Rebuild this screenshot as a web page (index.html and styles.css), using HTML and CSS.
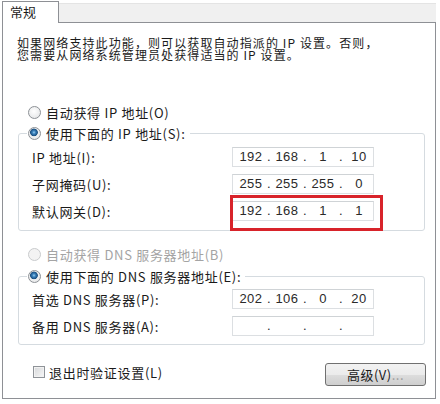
FILE: index.html
```html
<!DOCTYPE html>
<html lang="zh-CN">
<head>
<meta charset="UTF-8">
<title>Internet 协议版本 4 (TCP/IPv4) 属性</title>
<link rel="stylesheet" href="styles.css">
</head>
<body>
    <div class="dialog">
        <div class="tabs">
            <div class="tab">常规</div>
            <div class="tab-fill"></div>
        </div>
        <div class="panel">
            <div class="intro">
                <p>如果网络支持此功能，则可以获取自动指派的 IP 设置。否则，</p>
                <p>您需要从网络系统管理员处获得适当的 IP 设置。</p>
            </div>

            <!-- IP address -->
            <div class="option"><span class="radio"></span>自动获得 IP 地址(O)</div>
            <fieldset class="group ip-group">
                <legend><span class="radio checked"></span>使用下面的 IP 地址(S):</legend>
                <div class="row">
                    <span class="label">IP 地址(I):</span>
                    <div class="ip"><span>192</span><i>.</i><span>168</span><i>.</i><span>1</span><i>.</i><span>10</span></div>
                </div>
                <div class="row">
                    <span class="label">子网掩码(U):</span>
                    <div class="ip"><span>255</span><i>.</i><span>255</span><i>.</i><span>255</span><i>.</i><span>0</span></div>
                </div>
                <div class="row">
                    <span class="label">默认网关(D):</span>
                    <div class="ip marked"><span>192</span><i>.</i><span>168</span><i>.</i><span>1</span><i>.</i><span>1</span></div>
                </div>
            </fieldset>

            <!-- DNS -->
            <div class="option disabled"><span class="radio"></span>自动获得 DNS 服务器地址(B)</div>
            <fieldset class="group dns-group">
                <legend><span class="radio checked"></span>使用下面的 DNS 服务器地址(E):</legend>
                <div class="row">
                    <span class="label">首选 DNS 服务器(P):</span>
                    <div class="ip"><span>202</span><i>.</i><span>106</span><i>.</i><span>0</span><i>.</i><span>20</span></div>
                </div>
                <div class="row">
                    <span class="label">备用 DNS 服务器(A):</span>
                    <div class="ip"><span></span><i>.</i><span></span><i>.</i><span></span><i>.</i><span></span></div>
                </div>
            </fieldset>

            <div class="footer">
                <div class="check"><span class="box"></span>退出时验证设置(L)</div>
                <button class="advanced">高级(V)<span class="dots">...</span></button>
            </div>
        </div>
    </div>
</body>
</html>
```

FILE: styles.css
```css
body {
    margin: 0;
    background: #fff;
    font-family: "Noto Sans CJK SC", sans-serif;
    font-size: 13px;
    color: #1a1a1a;
}

.dialog {
    width: 434px;
    margin-left: 2px;
}

/* tab strip */
.tabs {
    display: flex;
    height: 22px;
}
.tab {
    position: relative;
    z-index: 1;
    width: 48px;
    height: 21px;
    margin-top: 1px;
    margin-bottom: -1px;
    padding-left: 7px;
    border: 1px solid #8e9095;
    border-bottom: none;
    background: #fff;
    line-height: 20px;
}
.tab-fill {
    flex: 1;
    margin-top: 3px;
    background: #f0f0f0;
    border-top: 1px solid #e4e4e4;
}

.panel {
    box-sizing: border-box;
    height: 377px;
    padding: 0 10px 0 15px;
    border: 1px solid #8e9095;
    background: #fff;
    letter-spacing: 0.7px;
}

.intro {
    margin: 14px 0 0 -1px;
    font-size: 12px;
    line-height: 12px;
    letter-spacing: 1.1px;
    white-space: nowrap;
}
.intro p {
    margin: 0;
    height: 12px;
}

/* radio options */
.option {
    display: flex;
    align-items: center;
    height: 16px;
    margin-left: 10px;
}
.ip-group + .option {
    margin-top: 15px;
}
.intro + .option {
    margin-top: 43px;
}
.option.disabled {
    color: #a4a4a4;
}

.radio {
    box-sizing: border-box;
    width: 13px;
    height: 13px;
    margin-right: 5px;
    border: 1px solid #8d9196;
    border-radius: 50%;
    background: radial-gradient(circle at 45% 40%, #ffffff 0, #e9eaeb 70%, #d5d7d9 100%);
}
.radio.checked {
    background:
        radial-gradient(circle at 45% 40%, #9fd0f0 0, #3c84bf 1.5px, #1b4f80 3.5px, transparent 4.2px),
        radial-gradient(circle at 45% 40%, #ffffff 0, #e9eaeb 70%, #d5d7d9 100%);
}
.disabled .radio {
    border-color: #c9cbcd;
    background: #f3f3f3;
}

/* group boxes */
.group {
    margin: 5px 0 0;
    padding: 0 0 9px 13px;
    border: 1px solid #d5dbe0;
    border-radius: 3px;
}
.dns-group {
    margin-top: 6px;
    padding-bottom: 8px;
}
.group legend {
    display: flex;
    align-items: center;
    height: 16px;
    margin-left: -5px;
    padding: 0 4px 0 1px;
}

.row {
    display: flex;
    align-items: center;
    margin-top: 7px;
}
.ip-group .row:first-of-type {
    margin-top: 6px;
}
.dns-group .row:first-of-type {
    margin-top: 5px;
}
.label {
    width: 200px;
}

/* address boxes */
.ip {
    position: relative;
    box-sizing: border-box;
    display: flex;
    width: 142px;
    height: 20px;
    padding-left: 4px;
    border: 1px solid #dcdfe2;
    border-top-color: #cfd3d6;
    font-family: "Liberation Sans", sans-serif;
    font-size: 13px;
    line-height: 18px;
    letter-spacing: 0.5px;
    color: #2a2a2a;
}
.ip span {
    width: 28px;
    text-align: center;
}
.ip i {
    width: 8px;
    font-style: normal;
    text-align: center;
}
.ip.marked::after {
    content: "";
    position: absolute;
    left: -3px;
    top: -7px;
    box-sizing: border-box;
    width: 153px;
    height: 36px;
    border: 3px solid #d8232a;
}

/* footer */
.footer {
    display: flex;
    align-items: center;
    justify-content: space-between;
    margin: 18px -1px 0 15px;
}
.check {
    display: flex;
    align-items: center;
    margin-top: -5px;
}
.box {
    box-sizing: border-box;
    width: 12px;
    height: 12px;
    margin-right: 4px;
    border: 1px solid #8f9398;
    background: linear-gradient(135deg, #d6d8da, #f7f7f7);
    box-shadow: inset 0 0 0 1px #f2f2f2;
}
.advanced {
    width: 101px;
    height: 23px;
    padding: 0;
    border: 1px solid #707070;
    border-radius: 3px;
    background: linear-gradient(#f2f2f2, #ebebeb 50%, #dddddd 50%, #cfcfcf);
    font-family: "Noto Sans CJK SC", sans-serif;
    font-size: 13px;
    letter-spacing: 0.5px;
    color: #1a1a1a;
}
.dots {
    color: #9a9a9a;
}
```
